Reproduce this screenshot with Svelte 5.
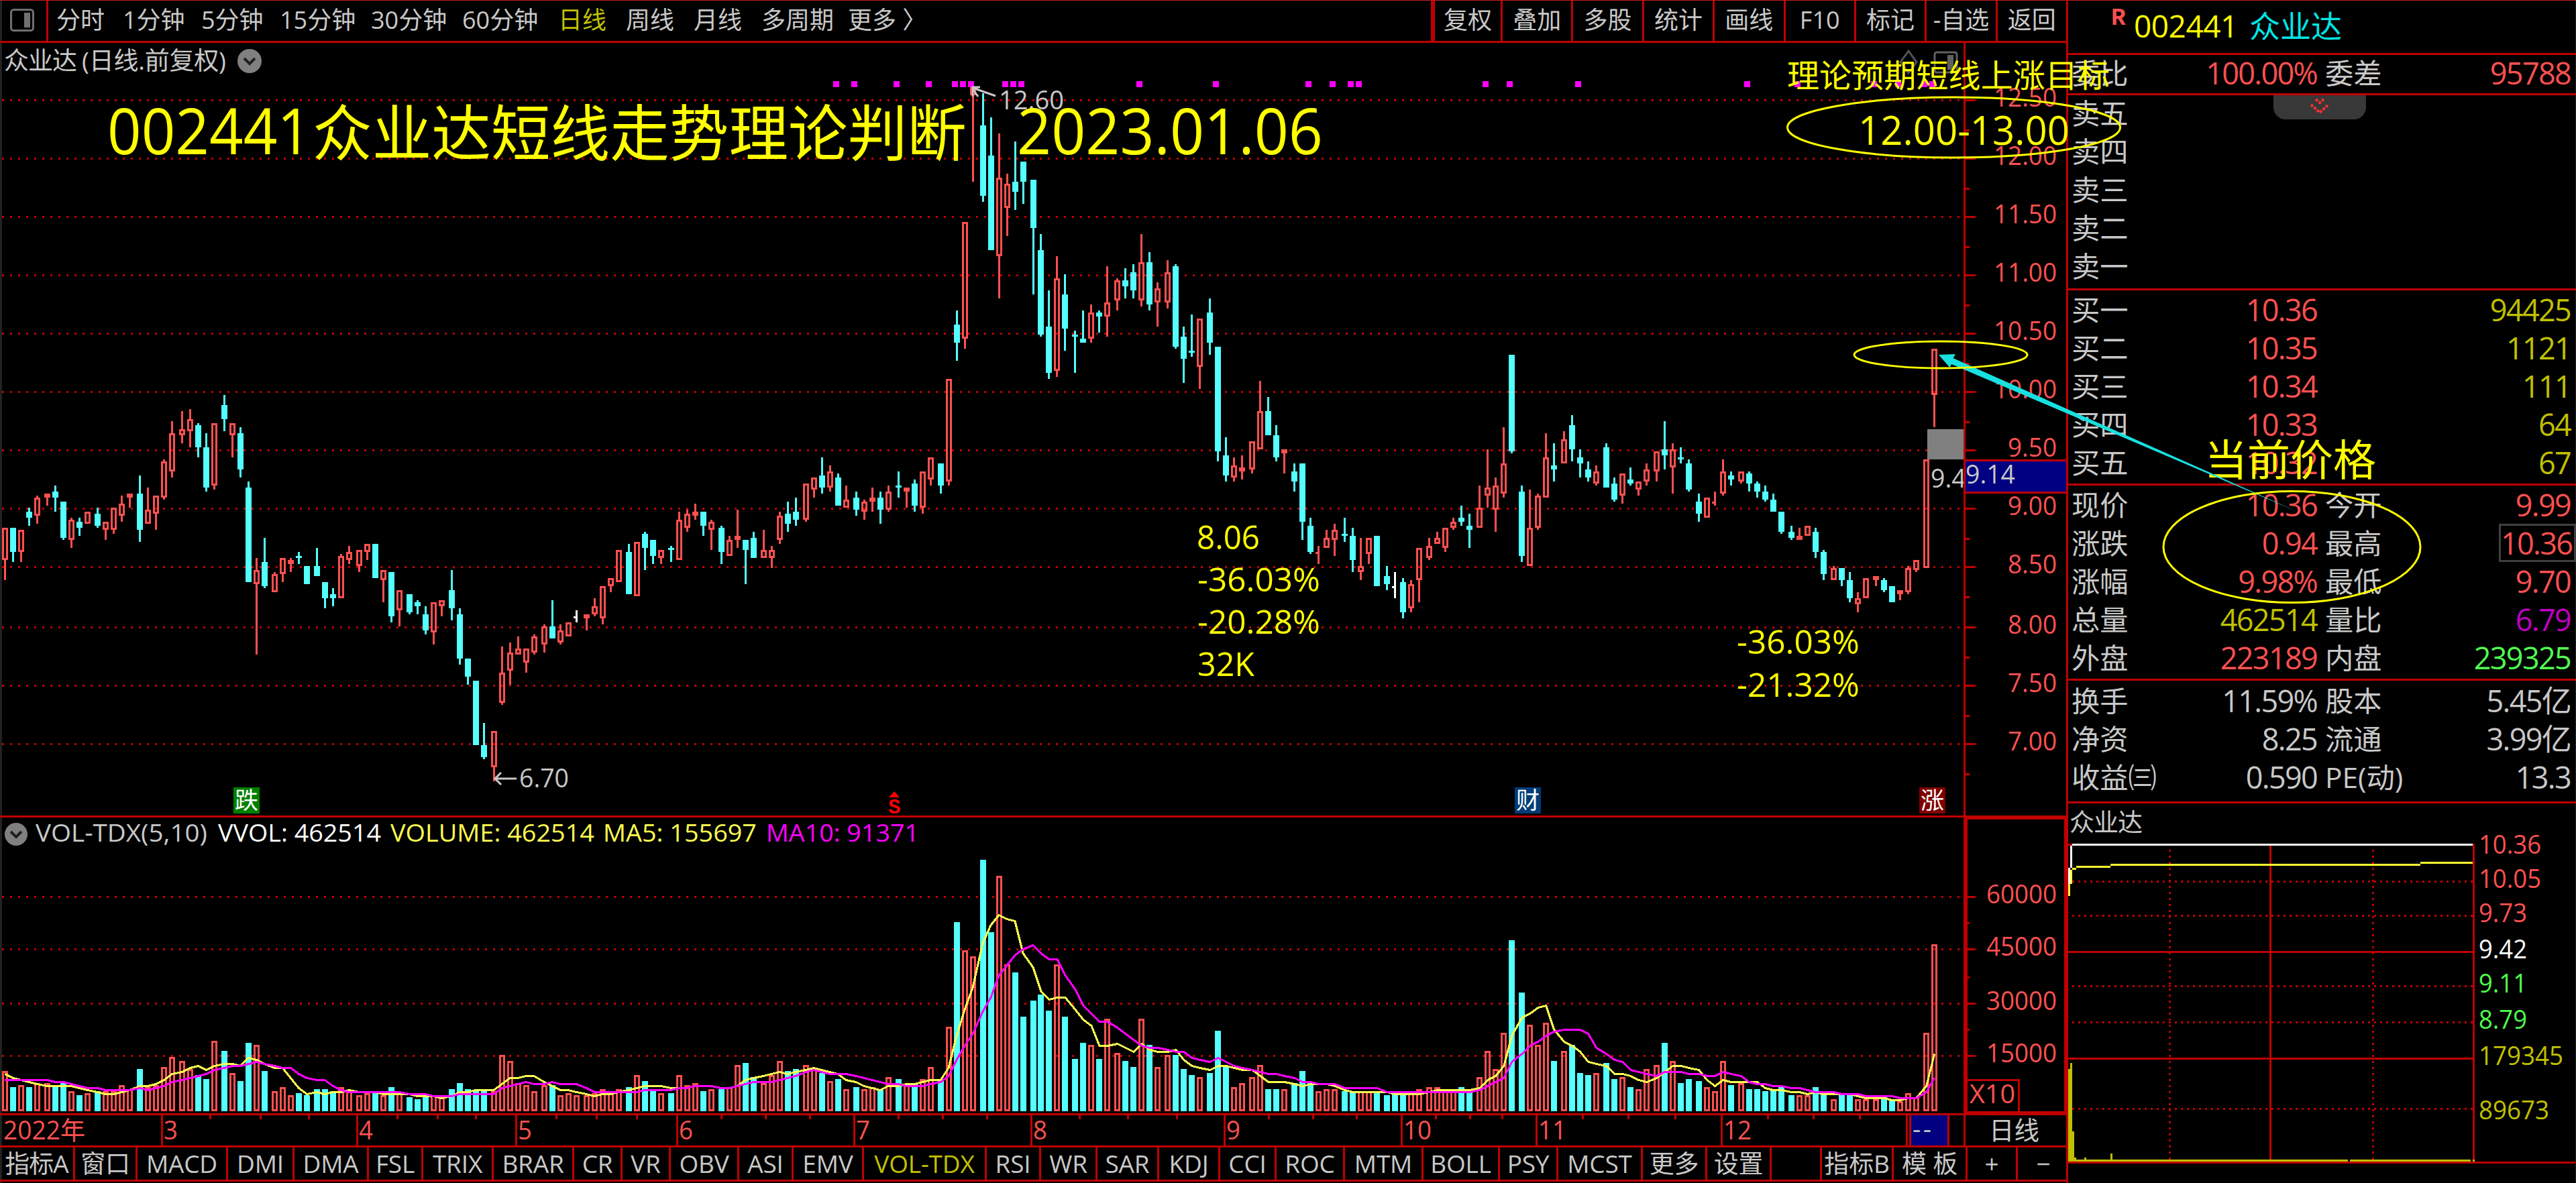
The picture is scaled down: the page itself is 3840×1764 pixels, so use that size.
<script>
  const RED = '#ff5050';
  const CYAN = '#54ffff';

  // Chart geometry is laid out on a coarse grid: one cell is 3 screen pixels.
  const slot = (k) => Math.floor(2.09 + k * 4.189);

  // Each block: screen offset, screen-to-data ratio, and candles as
  // "kind high bodyTop bodyBottom low" (r rising, c falling, h/w narrow doji).
  const blocks = [
    { top: 560, ratio: 2.45, rows: `r 556 556 673 747,c 556 556 644 681,r 563 563 644 681,c 483 497 519 549,r 439 446 512 541,r 431 431 446 475,c 402 424 446 497,c 461 461 593 600,r 519 527 600 630,c 519 534 556 586,r 497 497 541 541,c 483 505 549 556,r 534 534 563 600,r 483 483 563 578,r 439 468 512 534,r 431 431 446 483,c 365 431 563 608,r 409 490 541 541,r 439 439 505 563,r 306 314 446 453,r 167 211 350 372,r 130 196 218 247,r 122 159 203 262,c 174 181 262 299,c 211 262 409 424,r 174 174 402 416,c 71 108 159 203,r 174 174 218 299,c 189 211 343 372,c 387 409 755 755,r 666 711 762 1019,c 593 681 769 777,r 718 725 791 791,r 666 666 725 755,r 666 673 688 718,c 644 659 666 688,c 696 696 762 762,c 630 696 733 733,c 755 755 813 850,c 777 799 813 843,r 652 659 813 813,r 622 644 673 688,r 637 637 696 718,r 615 615 644 673,c 615 615 740 740,r 711 711 747 828,c 718 718 880 902,r 784 784 857 916,c 799 799 865 872,c 821 828 843 872,c 843 872 931 946,r 828 828 938 982,r 821 821 843 880,c 711 784 850 894,c 850 872 1034 1056,c 1034 1034 1100 1129,c 1115 1115 1350 1350,c 1269 1350 1394 1401,r 1298 1298 1431 1482,r 990 1085 1196 1203,r 975 1012 1078 1129,r 953 997 1019 1019,r 997 997 1049 1085,r 946 953 1012 1019,r 909 916 982 1012,c 821 916 960 960,r 909 931 975 982,r 902 902 953 953,w 857 880 887 902,r 872 872 887 931,r 813 843 872 880,r 769 769 887 909,r 740 740 769 791,r 637 637 755 755,c 615 644 799 799,r 608 608 806 806,c 571 578 630 711,c 600 600 659 688,r 637 637 666 688,c 622 630 637 681,r 497 527 673 673,r 490 505 556 571,r 468 497 512 527,c 497 497 549 586,r 527 534 563 637,c 549 556 644 688,r 586 600 659 659,r 490 586 600 630,c 600 600 637 762,c 571 593 666 666,r 563 637 666 666,r 622 637 666 703,r 497 512 600 615,c 461 505 541 571,c 446 497 527 549,r 394 394 527 534,r 372 372 416 446,c 299 365 409 431,r 328 350 409 424,c 358 372 475 475,r 402 453 483 483,c 424 446 490 512,r 453 461 497 527,r 409 446 461 497,c 424 446 490 541,r 402 424 490 497,c 350 402 409 446,r 409 409 424 483,c 380 394 475 497,r 350 350 483 505,r 299 299 380 402,c 321 321 402 431,r 12 12 387 402` },
    { top: 100, ratio: 2.45, rows: `c 889 941 1007 1073,r 566 566 992 1029,r 72 72 103 419,c 95 213 470 492,c 184 323 669 669,r 243 404 691 845,r 390 426 514 617,c 272 419 456 522,c 345 345 419 500,c 412 412 588 831,c 610 669 978 985,c 816 948 1117 1139,r 691 772 1110 1132,c 757 831 955 1036,c 963 978 985 1117,c 889 992 1007 1007,r 867 897 992 1007,c 889 897 911 970,r 728 860 911 985,r 772 779 853 889,c 735 779 801 845,c 720 750 816 845,r 610 713 853 875,c 676 713 867 889,r 786 808 860 948,r 706 750 860 882,c 720 728 1022 1029,c 948 985 1066 1154,c 904 1036 1044 1058,r 919 919 1095 1176,c 845 897 1007 1051,c 1022 1022 1404 1441,c 1352 1419 1492 1514,r 1426 1455 1499 1514,r 1419 1463 1477 1507,r 1367 1367 1470 1485,r 1147 1257 1396 1396,c 1205 1257 1345 1345,c 1308 1345 1426 1441,r 1396 1396 1411 1485,c 1448 1477 1514 1551` },
    { top: 480, ratio: 2.8, rows: `c 591 591 834 910,c 818 851 960 969,h 935 960 969 1011,r 868 902 944 944,r 843 868 910 977,c 818 885 893 918,c 860 893 994 1044,r 902 1019 1044 1078,r 902 902 969 1011,c 893 893 1103 1103,c 1019 1061 1095 1120,w 1044 1103 1112 1154,c 1070 1086 1212 1238,r 1078 1095 1196 1212,r 944 944 1078 1170,r 902 935 986 994,r 876 902 927 927,r 860 860 944 960,r 818 834 860 868,c 767 818 834 851,c 801 851 868 944,r 683 776 860 860,r 532 692 725 776,r 650 683 784 876,r 440 591 717 734,c 137 137 540 549,c 683 708 977 1002,r 700 860 1019 1019,r 717 725 860 868,r 465 566 734 734,c 507 599 616 666,r 456 490 591 591,c 389 431 532 582,c 532 566 591 650,c 582 616 650 666,r 599 624 675 683,c 507 524 692 692,c 650 675 742 750,r 633 633 725 759,c 608 658 675 683,r 666 666 700 725,r 591 616 666 683` },
    { top: 480, ratio: 2.6133, rows: `r 505 505 583 622,c 387 497 520 575,r 473 497 567 669,c 489 528 536 551,c 536 551 653 661,c 669 700 747 779,r 685 685 763 763,h 661 700 708 716,r 536 583 669 677,c 583 599 614 638,r 583 583 622 630,c 583 591 630 661,c 622 630 661 685,c 638 661 693 700,c 669 693 740 740,c 740 740 818 826,c 794 818 841 849,r 802 834 849 849,r 794 794 834 834,c 802 818 896 920,c 889 896 983 1006,r 951 959 1006 1006,c 959 959 1006 1030,c 975 1006 1077 1092,r 1053 1077 1100 1132,r 998 998 1077 1077,r 990 990 1006 1030,c 998 1006 1045 1053,c 1030 1030 1092 1092,r 1045 1045 1061 1085,r 951 959 1053 1061,r 928 928 967 975,r 536 536 959 959,r 105 105 285 410` }
  ];

  const candles = blocks
    .flatMap((b) =>
      b.rows.split(',').map((row) => {
        const [kind, ...v] = row.trim().split(' ');
        const [high, top, bottom, low] = v.map((n) => Math.round((Number(n) / b.ratio + b.top - 1) / 3));
        return { kind, high, top, bottom: Math.max(bottom, top + 1), low };
      })
    )
    .map((c, k) => ({
      ...c,
      x: slot(k),
      color: c.kind === 'c' ? CYAN : c.kind === 'w' ? '#ffffff' : RED
    }));

  const volumeTops = `1104 1170 1162 1170 1154 1154 1170 1154 1187 1204 1196 1187 1187 1187 1162 1180 1095 1170 1162 1088 1045 1062 1095 1120 1137 979 1020 1112 1145 987 995 1104 1187 1170 1204 1196 1204 1180 1180 1187 1170 1187 1204 1196 1196 1204 1170 1196 1212 1220 1204 1204 1212 1180 1154 1180 1187 1187 1187 1037 1062 1154 1162 1187 1162 1162 1204 1196 1204 1204 1196 1180 1187 1180 1170 1120 1145 1187 1196 1196 1120 1162 1154 1187 1180 1180 1170 1079 1070 1129 1154 1120 1062 1104 1095 1079 1095 1112 1145 1137 1180 1170 1180 1170 1180 1129 1137 1162 1154 1137 1088 1145 920 487 603 628 228 528 295 662 695 879 812 787 854 662 879 1054 987 995 1054 887 1029 1062 1087 887 995 1087 1037 1037 1095 1120 1129 1112 937 1087 1170 1154 1129 1079 1179 1179 1179 1154 1104 1154 1187 1179 1179 1187 1187 1187 1187 1187 1204 1196 1196 1196 1179 1170 1170 1187 1179 1170 1187 1129 1020 1095 945 562 778 912 995 904 1062 1020 995 1112 1120 1112 1070 1137 1129 1170 1179 1095 1079 987 1062 1154 1137 1145 1170 1187 1062 1162 1154 1179 1179 1187 1179 1170 1204 1204 1204 1170 1187 1220 1204 1204 1220 1220 1220 1212 1220 1229 1196 1212 945 578`
    .split(' ')
    .map(Number);

  const volY = (v) => Math.round(v / 8.34 + 399.67);
  const volumes = volumeTops.map((v, k) => ({
    x: slot(k),
    y: volY(v),
    falling: candles[k].kind === 'c' || k === 165
  }));

  const history = [1150, 1150, 1150, 1150, 1150, 1119, 1119, 1119, 1119, ...volumeTops];
  const average = (n) =>
    volumeTops
      .map((_, k) => {
        const part = history.slice(k + 10 - n, k + 10);
        const mean = part.reduce((a, b) => a + b, 0) / n;
        return `${slot(k) + 0.5},${volY(mean) + 0.5}`;
      })
      .join(' ');
  const ma5 = average(5);
  const ma10 = average(10);

  const flags = [99, 101, 106, 110, 113, 114, 115, 119, 120, 121, 135, 144, 155, 158, 160, 161, 176, 179, 187, 207, 213, 222, 225, 228, 229];

  const prices = [
    ['12.50', 49], ['12.00', 78], ['11.50', 107], ['11.00', 136], ['10.50', 165], ['10.00', 194],
    ['9.50', 223], ['9.00', 252], ['8.50', 281], ['8.00', 311], ['7.50', 340], ['7.00', 369]
  ];
  const halfTicks = [64, 93, 122, 151, 180, 209, 238, 267, 296, 326, 355, 384];
  const volAxis = [['60000', 445], ['45000', 471], ['30000', 498], ['15000', 524]];
  const volHalf = [458, 485, 511];

  const periods = ['分时', '1分钟', '5分钟', '15分钟', '30分钟', '60分钟', '日线', '周线', '月线', '多周期', '更多 〉'];
  const tools = ['复权', '叠加', '多股', '统计', '画线', 'F10', '标记', '-自选', '返回'];

  const months = [['3', 241], ['4', 532], ['5', 769], ['6', 1009], ['7', 1273], ['8', 1537], ['9', 1825], ['10', 2089], ['11', 2290], ['12', 2566]];
  const weeks = [313, 388, 460, 592, 652, 709, 829, 889, 949, 1075, 1141, 1207, 1339, 1405, 1471, 1609, 1681, 1754, 1891, 1957, 2022, 2140, 2191, 2239, 2359, 2427, 2497, 2635, 2703, 2772];

  const tabs = [
    ['指标A', 112], ['窗口', 93], ['MACD', 135], ['DMI', 99], ['DMA', 111], ['FSL', 81], ['TRIX', 105], ['BRAR', 120],
    ['CR', 72], ['VR', 72], ['OBV', 102], ['ASI', 81], ['EMV', 105], ['VOL-TDX', 183], ['RSI', 81], ['WR', 84],
    ['SAR', 92], ['KDJ', 91], ['CCI', 84], ['ROC', 102], ['MTM', 117], ['BOLL', 114], ['PSY', 87], ['MCST', 126],
    ['更多', 96], ['设置', 96], ['', 75], ['指标B', 107], ['模 板', 110], ['+', 75], ['−', 76]
  ];

  const sells = ['卖五', '卖四', '卖三', '卖二', '卖一'];
  const buys = [['买一', '10.36', '94425'], ['买二', '10.35', '1121'], ['买三', '10.34', '111'], ['买四', '10.33', '64'], ['买五', '10.32', '67']];
  const stats = [
    ['现价', '10.36', 'red', '今开', '9.99', 'red'],
    ['涨跌', '0.94', 'red', '最高', '10.36', 'red boxed'],
    ['涨幅', '9.98%', 'red', '最低', '9.70', 'red'],
    ['总量', '462514', 'olive', '量比', '6.79', 'purple'],
    ['外盘', '223189', 'red', '内盘', '239325', 'green']
  ];
  const basics = [
    ['换手', '11.59%', '股本', '5.45亿'],
    ['净资', '8.25', '流通', '3.99亿'],
    ['收益㈢', '0.590', 'PE(动)', '13.3']
  ];
  const miniLabels = [
    ['10.36', 1259, RED, 93], ['10.05', 1310, RED, 93], ['9.73', 1361, RED, 72], ['9.42', 1415, '#ffffff', 72],
    ['9.11', 1466, '#50ff50', 72], ['8.79', 1520, '#50ff50', 72], ['179345', 1574, '#c0c000', 126], ['89673', 1655, '#c0c000', 105]
  ];
</script>

<div class="screen">
  <main class="left">
    <header class="toolbar">
      <div class="toggle">
        <svg width="36" height="34" viewBox="0 0 36 34">
          <rect x="1.5" y="1.5" width="33" height="31" rx="4" fill="none" stroke="#707070" stroke-width="3" />
          <rect x="21" y="6" width="9" height="22" fill="#707070" />
        </svg>
      </div>
      <nav class="periods">
        {#each periods as p}
          <span class:active={p === '日线'}>{p}</span>
        {/each}
      </nav>
      <nav class="tools">
        {#each tools as t}<span>{t}</span>{/each}
      </nav>
    </header>

    <svg class="price" viewBox="0 64 3080 1152" width="3080" height="1152">
      <text class="label" x="6" y="104" textLength="109">众业达</text>
      <text class="label" x="122" y="104" textLength="215">(日线.前复权)</text>
      <circle cx="372" cy="91" r="18" fill="#808080" />
      <path d="M364 87l8 8 8-8" fill="none" stroke="#202020" stroke-width="4" />

      <path d="M2845 76l12 16.500-12 16.500-12-16.500z" fill="none" stroke="#505050" stroke-width="3" />
      <rect x="2884" y="78" width="33" height="30" rx="3" fill="none" stroke="#606060" stroke-width="3" />
      <rect x="2903" y="82" width="9" height="22" fill="#606060" />

      <g transform="translate(0 1) scale(2.99903 3)" shape-rendering="crispEdges">
        {#each prices as [, row]}
          <line class="dots" x1="1" x2="976" y1={row + 0.5} y2={row + 0.5} />
          <rect x="977" y={row} width="5" height="1" fill="#c00000" />
        {/each}
        {#each halfTicks as row}
          <rect x="977" y={row} width="2" height="1" fill="#c00000" />
        {/each}
        <rect x="976" y="20" width="1" height="386" fill="#c00000" />

        {#each flags as k}
          <rect x={slot(k) - 2} y="40" width="3" height="3" fill="#ff00ff" />
        {/each}

        {#each candles as c}
          {#if c.kind === 'h' || c.kind === 'w'}
            <rect x={c.x} y={c.high} width="1" height={c.low - c.high} fill={c.color} />
            <rect x={c.x - 1} y={c.top} width="1" height="1" fill={c.color} />
          {:else if c.kind === 'c'}
            <rect x={c.x} y={c.high} width="1" height={c.low - c.high} fill={c.color} />
            <rect x={c.x - 1} y={c.top} width="3" height={c.bottom - c.top} fill={c.color} />
          {:else}
            <rect x={c.x} y={c.high} width="1" height={c.top - c.high} fill={c.color} />
            <rect x={c.x} y={c.bottom} width="1" height={Math.max(0, c.low - c.bottom)} fill={c.color} />
            {#if c.bottom - c.top < 3}
              <rect x={c.x - 1} y={c.top} width="3" height={c.bottom - c.top} fill={c.color} />
            {:else}
              <rect x={c.x - 0.5} y={c.top + 0.5} width="2" height={c.bottom - c.top - 1} fill="none" stroke={c.color} stroke-width="1" />
            {/if}
          {/if}
        {/each}
      </g>

      {#each prices as [text, row]}
        <text class="axis" x={text.length > 4 ? 2972 : 2993} y={row * 3 + 12} textLength={text.length > 4 ? 94 : 73} lengthAdjust="spacingAndGlyphs">{text}</text>
      {/each}

      <g stroke="#c8c8c8" stroke-width="3" fill="none">
        <path d="M1484 143L1450 131M1461 130h-11v14M1451 134l7 10" />
        <path d="M770 1161H738M747 1152l-9 9 9 9" />
      </g>
      <text class="axis grey" x="1489" y="163" textLength="97" lengthAdjust="spacingAndGlyphs">12.60</text>
      <text class="axis grey" x="774" y="1174" textLength="74" lengthAdjust="spacingAndGlyphs">6.70</text>

      <rect x="2873" y="640" width="54" height="45" fill="#808080" />
      <clipPath id="plot"><rect x="2800" y="680" width="127" height="60" /></clipPath>
      <text class="axis grey" x="2878" y="727" textLength="74" lengthAdjust="spacingAndGlyphs" clip-path="url(#plot)">9.42</text>
      <rect x="2930" y="685" width="150" height="51" fill="#c00000" />
      <rect x="2930" y="688" width="150" height="45" fill="#000080" />
      <text class="axis grey" x="2930" y="721" textLength="74" lengthAdjust="spacingAndGlyphs">9.14</text>

      <rect x="348" y="1174" width="39" height="39" fill="#008000" />
      <text class="badge" x="350" y="1206">跌</text>
      <path d="M1333 1180l8 9h-16z" fill="#ff0000" />
      <text class="mark" x="1324" y="1213">S</text>
      <rect x="2258" y="1174" width="39" height="39" fill="#003c78" />
      <text class="badge" x="2260" y="1206">财</text>
      <rect x="2861" y="1174" width="39" height="39" fill="#800000" />
      <text class="badge" x="2863" y="1206">涨</text>
    </svg>

    <svg class="volume" viewBox="0 1216 3080 447" width="3080" height="447">
      <circle cx="24" cy="1244" r="17" fill="#808080" />
      <path d="M16 1240l8 8 8-8" fill="none" stroke="#202020" stroke-width="4" />
      <text class="label" x="53" y="1255" textLength="256" lengthAdjust="spacingAndGlyphs">VOL-TDX(5,10)</text>
      <text class="label" x="325" y="1255" textLength="243" lengthAdjust="spacingAndGlyphs" fill="#fff">VVOL: 462514</text>
      <text class="label" x="582" y="1255" textLength="304" lengthAdjust="spacingAndGlyphs" fill="#ffff50">VOLUME: 462514</text>
      <text class="label" x="899" y="1255" textLength="229" lengthAdjust="spacingAndGlyphs" fill="#ffff50">MA5: 155697</text>
      <text class="label" x="1142" y="1255" textLength="228" lengthAdjust="spacingAndGlyphs" fill="#ff00ff">MA10: 91371</text>

      <g transform="translate(0 1) scale(2.99903 3)" shape-rendering="crispEdges">
        {#each volAxis as [, row]}
          <line class="dots" x1="1" x2="976" y1={row + 0.5} y2={row + 0.5} />
        {/each}
        {#each volumes as v}
          {#if v.falling}
            <rect x={v.x - 1} y={v.y} width="3" height={552 - v.y} fill={CYAN} />
          {:else}
            <rect x={v.x - 0.5} y={v.y + 0.5} width="2" height={551 - v.y} fill="none" stroke={RED} stroke-width="1" />
          {/if}
        {/each}
        <polyline points={ma5} fill="none" stroke="#ffff50" stroke-width="1" />
        <polyline points={ma10} fill="none" stroke="#ff00ff" stroke-width="1" />
        <g fill="#c00000">
          <rect x="0" y="405" width="1027" height="1" />
          <rect x="0" y="553" width="1027" height="1" />
          <rect x="976" y="405" width="2" height="149" />
          <rect x="976" y="406" width="51" height="1" />
          <rect x="976" y="552" width="51" height="1" />
          <rect x="1026" y="405" width="1" height="149" />
          <rect x="978" y="536" width="26" height="1" />
          <rect x="1003" y="536" width="1" height="17" />
          {#each volAxis as [, row]}<rect x="978" y={row} width="4" height="1" />{/each}
          {#each volHalf as row}<rect x="978" y={row} width="1" height="1" />{/each}
        </g>
      </g>
      {#each volAxis as [text, row]}
        <text class="axis" x="2961" y={row * 3 + 12} textLength="105" lengthAdjust="spacingAndGlyphs">{text}</text>
      {/each}
      <text class="axis" x="2936" y="1645" textLength="68" lengthAdjust="spacingAndGlyphs">X10</text>
    </svg>

    <svg class="dates" viewBox="0 1663 3080 48" width="3080" height="48">
      <g fill="#c00000">
        {#each weeks as x}<rect x={x - 1} y="1663" width="3" height="6" />{/each}
        {#each months as [, x]}<rect x={x - 1} y="1663" width="3" height="45" />{/each}
        <rect x="2841" y="1663" width="3" height="45" />
        <rect x="2846" y="1663" width="60" height="45" />
        <rect x="2927" y="1663" width="3" height="45" />
        <rect x="0" y="1708" width="3080" height="3" />
      </g>
      <rect x="2849" y="1663" width="54" height="45" fill="#000080" />
      <text class="axis grey" x="2851" y="1697" textLength="28">--</text>
      <text class="axis" x="5" y="1699" textLength="122" lengthAdjust="spacingAndGlyphs">2022年</text>
      {#each months as [text, x]}
        <text class="axis" x={x + 3} y="1699" textLength={text.length * 21} lengthAdjust="spacingAndGlyphs">{text}</text>
      {/each}
      <text class="axis grey" x="2965" y="1699" textLength="75" lengthAdjust="spacingAndGlyphs">日线</text>
    </svg>

    <nav class="tabs">
      {#each tabs as [name, width]}
        <span class:active={name === 'VOL-TDX'} style:width="{width}px">{name}</span>
      {/each}
    </nav>
  </main>

  <aside class="panel">
    <div class="name">
      <b>R</b><span class="code">002441</span><span class="stock">众业达</span>
    </div>
    <section class="ratio">
      <div class="row">
        <span>委比</span><i class="red">100.00%</i><span>委差</span><i class="red">95788</i>
      </div>
    </section>
    <section class="sell">
      <div class="fold">
        <svg width="30" height="26" viewBox="0 0 30 26" fill="none" stroke="#ff3030" stroke-width="4" stroke-dasharray="4 2">
          <path d="M9 2l6 5 6-5M2 10l13 12 13-12" />
        </svg>
      </div>
      {#each sells as s}<div class="row"><span>{s}</span></div>{/each}
    </section>
    <section class="buy">
      {#each buys as [label, price, amount]}
        <div class="row"><span>{label}</span><i class="red">{price}</i><span></span><i class="olive">{amount}</i></div>
      {/each}
    </section>
    <section class="stats">
      {#each stats as [a, av, ac, b, bv, bc]}
        <div class="row"><span>{a}</span><i class={ac}>{av}</i><span>{b}</span><i class={bc}>{bv}</i></div>
      {/each}
    </section>
    <section class="basics">
      {#each basics as [a, av, b, bv]}
        <div class="row"><span>{a}</span><i>{av}</i><span>{b}</span><i>{bv}</i></div>
      {/each}
    </section>

    <svg class="mini" viewBox="3083 1198 757 566" width="757" height="566">
      <text class="label" x="3085" y="1240" textLength="109">众业达</text>
      <g shape-rendering="crispEdges">
        <g stroke="#c00000" stroke-width="3">
          <path d="M3089 1314.500H3686M3089 1365.500H3686M3089 1470.500H3686M3089 1524.500H3686M3089 1653.500H3686" stroke-dasharray="3 6" />
          <path d="M3234.500 1267V1729M3537.500 1267V1729" stroke-dasharray="3 6" />
          <path d="M3083 1419.500H3689M3083 1578.500H3689M3384.500 1261V1729M3687.500 1258V1732M3083 1733.500H3839M3083 1259.500H3089" />
        </g>
        <g fill="#fff">
          <rect x="3089" y="1258" width="597" height="3" />
          <rect x="3086" y="1261" width="3" height="33" />
          <rect x="3083" y="1294" width="3" height="24" />
        </g>
        <g fill="#ffff30">
          <rect x="3083" y="1318" width="3" height="18" />
          <rect x="3086" y="1297" width="3" height="21" />
          <rect x="3089" y="1294" width="6" height="3" />
          <rect x="3095" y="1291" width="51" height="3" />
          <rect x="3146" y="1288" width="462" height="3" />
          <rect x="3608" y="1285" width="78" height="3" />
        </g>
        <g fill="#c0c000">
          <rect x="3083" y="1594" width="3" height="138" />
          <rect x="3086" y="1585" width="3" height="147" />
          <rect x="3089" y="1687" width="3" height="45" />
          <rect x="3092" y="1726" width="3" height="6" />
          <rect x="3107" y="1726" width="3" height="6" />
          <rect x="3146" y="1720" width="3" height="12" />
          <rect x="3083" y="1729" width="417" height="3" />
          <rect x="3503" y="1729" width="180" height="3" />
          <rect x="3686" y="1729" width="3" height="3" />
        </g>
      </g>
      {#each miniLabels as [text, y, fill, length]}
        <text class="axis" x="3695" y={y + 14} {fill} textLength={length} lengthAdjust="spacingAndGlyphs">{text}</text>
      {/each}
    </svg>
  </aside>

  <svg class="notes" viewBox="0 0 3840 1764" width="3840" height="1764">
    <g fill="#ffff00">
      <text font-size="95" x="160" y="230" textLength="304" lengthAdjust="spacingAndGlyphs">002441</text>
      <text font-size="91" x="466" y="232" textLength="975" lengthAdjust="spacingAndGlyphs">众业达短线走势理论判断</text>
      <text font-size="95" x="1516" y="230" textLength="456" lengthAdjust="spacingAndGlyphs">2023.01.06</text>
      <text font-size="48" x="2664" y="130" textLength="481">理论预期短线上涨目标</text>
      <text font-size="61" x="2770" y="216" textLength="315" lengthAdjust="spacingAndGlyphs">12.00-13.00</text>
      <text font-size="64" x="3286" y="709" textLength="256">当前价格</text>
      <g font-size="49">
        <text x="1784" y="819" textLength="94" lengthAdjust="spacingAndGlyphs">8.06</text>
        <text x="1785" y="882" textLength="183" lengthAdjust="spacingAndGlyphs">-36.03%</text>
        <text x="1785" y="945" textLength="183" lengthAdjust="spacingAndGlyphs">-20.28%</text>
        <text x="1785" y="1008" textLength="85" lengthAdjust="spacingAndGlyphs">32K</text>
        <text x="2589" y="975" textLength="183" lengthAdjust="spacingAndGlyphs">-36.03%</text>
        <text x="2589" y="1039" textLength="183" lengthAdjust="spacingAndGlyphs">-21.32%</text>
      </g>
    </g>
    <polygon points="2890,529 2915,528 2911.500,534 3427,764 2909,543 2906.500,548" fill="#18e0e0" />
    <g fill="none" stroke="#ffff00" stroke-width="3">
      <ellipse cx="2912.500" cy="190" rx="248" ry="45" />
      <ellipse cx="2893" cy="529" rx="129" ry="20" />
      <ellipse cx="3416.500" cy="815.500" rx="191.500" ry="83" />
    </g>
  </svg>
</div>

<style>
  :global(body) {
    margin: 0;
    background: #000;
  }
  .screen {
    position: relative;
    display: grid;
    grid-template-columns: 3080px 760px;
    width: 3840px;
    height: 1764px;
    box-sizing: border-box;
    overflow: hidden;
    background: #000;
    color: #c8c8c8;
    font-family: 'Open Sans', 'Noto Sans CJK SC', sans-serif;
    font-size: 36px;
  }
  svg {
    display: block;
    overflow: visible;
  }
  .left {
    display: flex;
    flex-direction: column;
    width: 3080px;
    box-shadow: inset 3px 0 #222;
  }
  .toolbar {
    display: flex;
    height: 64px;
    box-sizing: border-box;
    border-top: 1px solid #c02020;
    border-bottom: 3px solid #c00000;
    line-height: 57px;
    white-space: nowrap;
  }
  .toggle {
    width: 72px;
    box-sizing: border-box;
    padding: 12px 0 0 15px;
    border-right: 3px solid #c00000;
    margin-right: 12px;
    flex: none;
  }
  .periods {
    display: grid;
    grid-template-columns: 99px 117px 117px 136px 136px 143px 101px 101px 101px 129px 120px;
    width: 2049px;
    flex: none;
    justify-content: start;
  }
  .active {
    color: #c0c000;
  }
  .tools {
    display: flex;
    flex: 1;
    border-left: 6px solid #c00000;
    box-sizing: border-box;
  }
  .tools span {
    flex: 1;
    text-align: center;
    border-right: 3px solid #c00000;
  }
  .tools span:first-child {
    flex: none;
    width: 98px;
  }
  .tools span:last-child {
    border-right: 0;
  }
  .label {
    font-size: 37px;
  }
  text {
    fill: #c8c8c8;
  }
  text[fill='#fff'] {
    fill: #fff;
  }
  text[fill='#ffff50'] {
    fill: #ffff50;
  }
  text[fill='#ff00ff'] {
    fill: #ff00ff;
  }
  .axis {
    font-size: 38px;
    fill: #ff5050;
  }
  .axis.grey {
    fill: #c8c8c8;
  }
  .axis[fill='#ffffff'] {
    fill: #ffffff;
  }
  .axis[fill='#50ff50'] {
    fill: #50ff50;
  }
  .axis[fill='#c0c000'] {
    fill: #c0c000;
  }
  .badge {
    font-size: 35px;
    fill: #fff;
  }
  .mark {
    font: bold 31px 'Liberation Mono', monospace;
    fill: #ff0000;
  }
  .dots {
    stroke: #c00000;
    stroke-width: 1;
    stroke-dasharray: 1 3;
  }
  .tabs {
    display: flex;
    height: 51px;
    box-sizing: border-box;
    border-bottom: 3px solid #c00000;
    line-height: 48px;
    white-space: nowrap;
    font-size: 37px;
  }
  .tabs span {
    flex: none;
    box-sizing: border-box;
    border-right: 3px solid #c00000;
    text-align: center;
    letter-spacing: -0.2px;
  }
  .tabs span:first-child {
    letter-spacing: -1px;
  }
  .tabs span:last-child {
    border-right: 0;
  }
  .panel {
    display: flex;
    flex-direction: column;
    width: 760px;
    height: 1764px;
    box-sizing: border-box;
    border-left: 3px solid #c00000;
    border-top: 1px solid #c02020;
    box-shadow: inset -1px 0 #222;
    font-size: 42.300px;
  }
  .name {
    display: flex;
    height: 81px;
    box-sizing: border-box;
    border-bottom: 3px solid #c00000;
    padding-left: 64px;
    line-height: 75px;
  }
  .name b {
    width: 34px;
    color: #ff5050;
    font: bold 36px/54px 'Liberation Mono', monospace;
  }
  .code {
    width: 172px;
    font-size: 46px;
    letter-spacing: -0.5px;
    color: #ffff00;
  }
  .stock {
    font-size: 46px;
    color: #00e5e5;
  }
  section {
    border-bottom: 3px solid #c00000;
    box-sizing: border-box;
    flex: none;
  }
  .ratio {
    height: 60px;
  }
  .sell,
  .buy,
  .stats {
    height: 291px;
  }
  .basics {
    padding-top: 1px;
    height: 183px;
  }
  .sell {
    position: relative;
  }
  .ratio .row,
  .sell .row {
    line-height: 54px;
  }
  .fold {
    position: absolute;
    top: 0;
    left: 306px;
    display: flex;
    justify-content: center;
    width: 138px;
    height: 36px;
    box-sizing: border-box;
    padding-top: 4px;
    border-radius: 0 0 18px 18px;
    background: #383838;
  }
  .row {
    display: grid;
    grid-template-columns: 130px 236px 145px 233px;
    column-gap: 0;
    padding-left: 5px;
    height: 57px;
    line-height: 57px;
    white-space: nowrap;
  }
  .row span:nth-of-type(2) {
    padding-left: 12px;
  }
  i {
    font-style: normal;
    font-size: 45px;
    letter-spacing: -1.700px;
    text-align: right;
  }
  .red {
    color: #ff5050;
  }
  .olive {
    color: #c0c000;
  }
  .purple {
    color: #c000c0;
  }
  .green {
    color: #50ff50;
  }
  .boxed {
    justify-self: end;
    height: 57px;
    width: 115px;
    box-sizing: border-box;
    margin-right: -8px;
    padding-right: 5px;
    border: 3px solid #404040;
    line-height: 51px;
  }
  .notes {
    position: absolute;
    inset: 0;
    pointer-events: none;
  }
  .notes text {
    fill: #ffff00;
  }
</style>
